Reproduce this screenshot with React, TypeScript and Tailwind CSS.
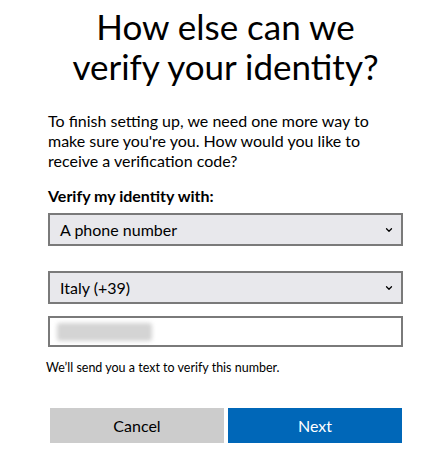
import { ChevronDown } from "lucide-react";

export default function App() {
  return (
    <main className="min-h-screen bg-white text-black font-['Lato',sans-serif]">
      <div className="w-[428px] pl-12 pr-[25px] pt-[6px]">
        {/* heading */}
        <h1 className="text-center text-[35px] leading-[40px] font-normal -mx-6">
          How else can we
          <br />
          verify your identity?
        </h1>

        <p className="mt-[25px] text-[16px] leading-[20px]">
          To finish setting up, we need one more way to make sure you're you. How would you like to receive a verification code?
        </p>

        <label className="block mt-[15px] text-[16px] leading-[20px] font-bold">Verify my identity with:</label>

        <div className="relative mt-[7px] h-[33px] border-2 border-[#7a7a7a] bg-[#e8e8ec]">
          <div className="pl-[10px] text-[16px] leading-[29px]">A phone number</div>
          <ChevronDown className="absolute right-[7px] top-[10px] w-[10px] h-[10px]" strokeWidth={3} />
        </div>

        <div className="relative mt-[25px] h-[33px] border-2 border-[#7a7a7a] bg-[#e8e8ec]">
          <div className="pl-[10px] text-[16px] leading-[29px]">Italy (+39)</div>
          <ChevronDown className="absolute right-[7px] top-[10px] w-[10px] h-[10px]" strokeWidth={3} />
        </div>

        <div className="mt-[12px] h-[31px] border-2 border-[#7a7a7a] bg-white flex items-center pl-[7px]">
          <div className="w-[95px] h-[18px] bg-[#d4d4d4] rounded-[3px] blur-[2px]" />
        </div>

        <p className="mt-[13px] -ml-[2px] text-[12.5px] leading-[16px]">We’ll send you a text to verify this number.</p>

        <div className="mt-[32px] ml-[2px] mr-[1px] flex gap-[4px]">
          <button className="flex-1 h-[35px] bg-[#cccccc] text-[16px]">Cancel</button>
          <button className="flex-1 h-[35px] bg-[#0067b8] text-white text-[16px]">Next</button>
        </div>
      </div>
    </main>
  );
}
